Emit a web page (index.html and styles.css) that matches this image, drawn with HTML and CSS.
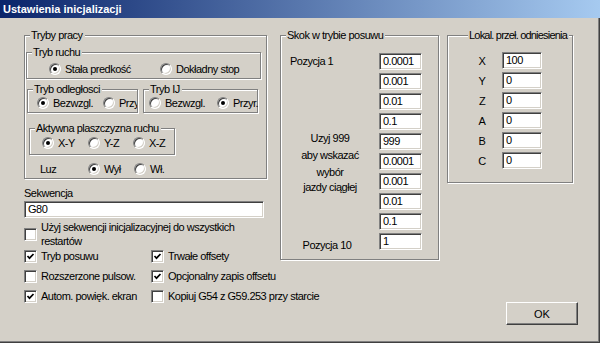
FILE: index.html
```html
<!DOCTYPE html>
<html lang="pl">
<head>
  <meta charset="UTF-8" />
  <title>Ustawienia inicjalizacji</title>
  <link rel="stylesheet" href="styles.css">
</head>
<body>
  <div class="dialog">
    <div class="titlebar">Ustawienia inicjalizacji</div>

    <div class="content">
      <!-- left column -->
      <div class="col-left">
        <fieldset class="group modes">
          <legend>Tryby pracy</legend>

          <fieldset class="group motion">
            <legend>Tryb ruchu</legend>
            <div class="radios r-motion">
              <label class="radio"><span class="dot on"></span>Stała predkość</label>
              <label class="radio"><span class="dot"></span>Dokładny stop</label>
            </div>
          </fieldset>

          <div class="pair">
            <fieldset class="group dist">
              <legend>Tryb odległosci</legend>
              <div class="radios r-dist">
                <label class="radio"><span class="dot on"></span>Bezwzgl.</label>
                <label class="radio"><span class="dot"></span>Przy</label>
              </div>
            </fieldset>
            <fieldset class="group ij">
              <legend>Tryb IJ</legend>
              <div class="radios r-ij">
                <label class="radio"><span class="dot"></span>Bezwzgl.</label>
                <label class="radio"><span class="dot on"></span>Przyr.</label>
              </div>
            </fieldset>
          </div>

          <fieldset class="group plane">
            <legend>Aktywna plaszczyzna ruchu</legend>
            <div class="radios r-plane">
              <label class="radio"><span class="dot on"></span>X-Y</label>
              <label class="radio"><span class="dot"></span>Y-Z</label>
              <label class="radio"><span class="dot"></span>X-Z</label>
            </div>
          </fieldset>

          <div class="radios r-luz">
            <span>Luz</span>
            <label class="radio"><span class="dot on"></span>Wył</label>
            <label class="radio"><span class="dot"></span>Wł.</label>
          </div>
        </fieldset>

        <div class="seq-label">Sekwencja</div>
        <div class="textbox seq">G80</div>

        <label class="check check-long">
          <span class="box"></span>
          <span>Użyj sekwencji inicjalizacyjnej do wszystkich<br>restartów</span>
        </label>

        <div class="checks">
          <label class="check"><span class="box on"><svg viewBox="0 0 9 9"><polyline points="1.5,4 3.5,6.2 7.5,2"/></svg></span>Tryb posuwu</label>
          <label class="check"><span class="box on"><svg viewBox="0 0 9 9"><polyline points="1.5,4 3.5,6.2 7.5,2"/></svg></span>Trwałe offsety</label>
          <label class="check"><span class="box"></span>Rozszerzone pulsow.</label>
          <label class="check"><span class="box on"><svg viewBox="0 0 9 9"><polyline points="1.5,4 3.5,6.2 7.5,2"/></svg></span>Opcjonalny zapis offsetu</label>
          <label class="check"><span class="box on"><svg viewBox="0 0 9 9"><polyline points="1.5,4 3.5,6.2 7.5,2"/></svg></span>Autom. powięk. ekran</label>
          <label class="check"><span class="box"></span>Kopiuj G54 z G59.253 przy starcie</label>
        </div>
      </div>

      <!-- middle column -->
      <fieldset class="group steps">
        <legend>Skok w trybie posuwu</legend>
        <div class="steps-body">
          <div class="step-labels">
            <div class="pos-first">Pozycja 1</div>
            <div class="hint">
              <div class="h1">Uzyj 999</div>
              <div class="h2">aby wskazać</div>
              <div class="h3">wybór</div>
              <div class="h4">jazdy ciągłej</div>
            </div>
            <div class="pos-last">Pozycja 10</div>
          </div>
          <div class="step-inputs">
            <div class="textbox">0.0001</div>
            <div class="textbox">0.001</div>
            <div class="textbox">0.01</div>
            <div class="textbox">0.1</div>
            <div class="textbox">999</div>
            <div class="textbox">0.0001</div>
            <div class="textbox">0.001</div>
            <div class="textbox">0.01</div>
            <div class="textbox">0.1</div>
            <div class="textbox">1</div>
          </div>
        </div>
      </fieldset>

      <!-- right column -->
      <div class="col-right">
        <fieldset class="group offsets">
          <legend>Lokal. przeł. odniesienia</legend>
          <div class="axis-grid">
            <span>X</span><div class="textbox">100</div>
            <span>Y</span><div class="textbox">0</div>
            <span>Z</span><div class="textbox">0</div>
            <span>A</span><div class="textbox">0</div>
            <span>B</span><div class="textbox">0</div>
            <span>C</span><div class="textbox">0</div>
          </div>
        </fieldset>
        <button class="btn">OK</button>
      </div>
    </div>
  </div>
</body>
</html>
```

FILE: styles.css
```css
* {
  box-sizing: border-box;
}

body {
  margin: 0;
  font-family: 'Liberation Sans', Arial, sans-serif;
  font-size: 11px;
  letter-spacing: -0.5px;
  color: #000;
  background: #d4d0c8;
}

.dialog {
  width: 600px;
  height: 343px;
  background: #d4d0c8;
  box-shadow: inset -1px -1px 0 #404040, inset -2px -2px 0 #808080;
  overflow: hidden;
}

.titlebar {
  height: 18px;
  line-height: 18px;
  padding-left: 3px;
  color: #fff;
  font-weight: bold;
  letter-spacing: 0;
  background: linear-gradient(to right, #0a246a, #a6caf0);
}

.content {
  display: flex;
  align-items: flex-start;
  padding: 11px 0 0 24px;
}

/* etched group boxes */
.group {
  margin: 0;
  padding: 0;
  min-width: 0;
  border: 1px solid #808080;
  box-shadow: inset 1px 1px 0 #fff, 1px 1px 0 #fff;
}

.group legend {
  margin-left: 5px;
  padding: 0 2px 0 1px;
  line-height: 13px;
  white-space: nowrap;
  background: #d4d0c8;
}

/* left column */
.col-left {
  width: 243px;
}

.modes {
  width: 243px;
  padding-bottom: 2px;
}

.motion {
  width: 235px;
  margin: 4px 0 0 1px;
  padding-bottom: 2px;
}

.pair {
  display: flex;
  margin-top: 4px;
}

.dist {
  width: 111px;
  margin-left: 2px;
  padding-bottom: 2px;
  overflow: hidden;
}

.ij {
  width: 115px;
  margin-left: 5px;
  padding-bottom: 2px;
}

.plane {
  width: 146px;
  margin: 9px 0 0 4px;
  padding-bottom: 4px;
}

.radios {
  display: grid;
  align-items: center;
  height: 14px;
  white-space: nowrap;
}

.r-motion {
  margin-top: 3px;
  padding-left: 22px;
  grid-template-columns: 111px auto;
}

.r-dist {
  padding-left: 9px;
  grid-template-columns: 66px auto;
}

.r-ij {
  padding-left: 5px;
  grid-template-columns: 68px auto;
}

.r-plane {
  margin-top: 1px;
  padding-left: 12px;
  grid-template-columns: 46px 45px auto;
}

.r-luz {
  margin-top: 7px;
  padding-left: 15px;
  grid-template-columns: 48px 46px auto;
}

.radio {
  display: flex;
  align-items: center;
  gap: 4px;
}

.dot {
  position: relative;
  width: 12px;
  height: 12px;
  flex: none;
  border-radius: 50%;
  background: #fff;
  border: 1px solid;
  border-color: #808080 #fff #fff #808080;
  box-shadow: inset 1px 1px 0 #404040, inset -1px -1px 0 #d4d0c8;
}

.dot.on::after {
  content: "";
  position: absolute;
  left: 3px;
  top: 3px;
  width: 4px;
  height: 4px;
  border-radius: 50%;
  background: #000;
}

.seq-label {
  margin-top: 8px;
  line-height: 13px;
}

.textbox {
  height: 17px;
  line-height: 15px;
  padding-left: 3px;
  background: #fff;
  border: 1px solid;
  border-color: #808080 #fff #fff #808080;
  box-shadow: inset 1px 1px 0 #404040, inset -1px -1px 0 #d4d0c8;
  white-space: nowrap;
  overflow: hidden;
}

.seq {
  width: 240px;
  margin-top: 1px;
}

.check {
  display: flex;
  align-items: center;
  gap: 4px;
  white-space: nowrap;
}

.check-long {
  margin-top: 2px;
  line-height: 14px;
}

.box {
  display: flex;
  align-items: center;
  justify-content: center;
  width: 13px;
  height: 13px;
  flex: none;
  background: #fff;
  border: 1px solid;
  border-color: #808080 #fff #fff #808080;
  box-shadow: inset 1px 1px 0 #404040, inset -1px -1px 0 #d4d0c8;
}

.box svg {
  width: 9px;
  height: 9px;
}

.box polyline {
  fill: none;
  stroke: #000;
  stroke-width: 1.7;
}

.checks {
  display: grid;
  grid-template-columns: 127px auto;
  grid-auto-rows: 14px;
  row-gap: 6px;
  margin-top: 1px;
}

/* middle column */
.steps {
  width: 159px;
  margin-left: 13px;
  padding: 11px 0 6px 0;
}

.steps-body {
  display: flex;
}

.step-labels {
  width: 98px;
  text-align: center;
}

.pos-first {
  margin-top: 1px;
  line-height: 15px;
  text-align: left;
  padding-left: 9px;
}

.hint {
  margin-top: 60px;
}

.h1 { line-height: 18px; }
.h2 { line-height: 17px; }
.h3 { line-height: 16px; }
.h4 { line-height: 14px; }

.pos-last {
  margin-top: 44px;
  line-height: 15px;
  padding-right: 6px;
}

.step-inputs {
  display: flex;
  flex-direction: column;
  gap: 3px;
  width: 43px;
}

/* right column */
.col-right {
  display: flex;
  flex-direction: column;
  width: 131px;
  margin-left: 8px;
}

.offsets {
  width: 126px;
  padding: 10px 0 13px 17px;
}

.offsets legend {
  margin-left: 3px;
  letter-spacing: -0.8px;
}

.axis-grid {
  display: grid;
  grid-template-columns: 34px 40px;
  column-gap: 3px;
  row-gap: 3px;
  grid-auto-rows: 17px;
  align-items: center;
}

.axis-grid span {
  text-align: center;
}

.btn {
  align-self: flex-end;
  width: 72px;
  height: 23px;
  margin-top: 119px;
  font-family: inherit;
  font-size: 11px;
  letter-spacing: 0;
  background: #d4d0c8;
  border: 1px solid;
  border-color: #fff #404040 #404040 #fff;
  box-shadow: inset -1px -1px 0 #808080;
  padding: 0;
}
```
